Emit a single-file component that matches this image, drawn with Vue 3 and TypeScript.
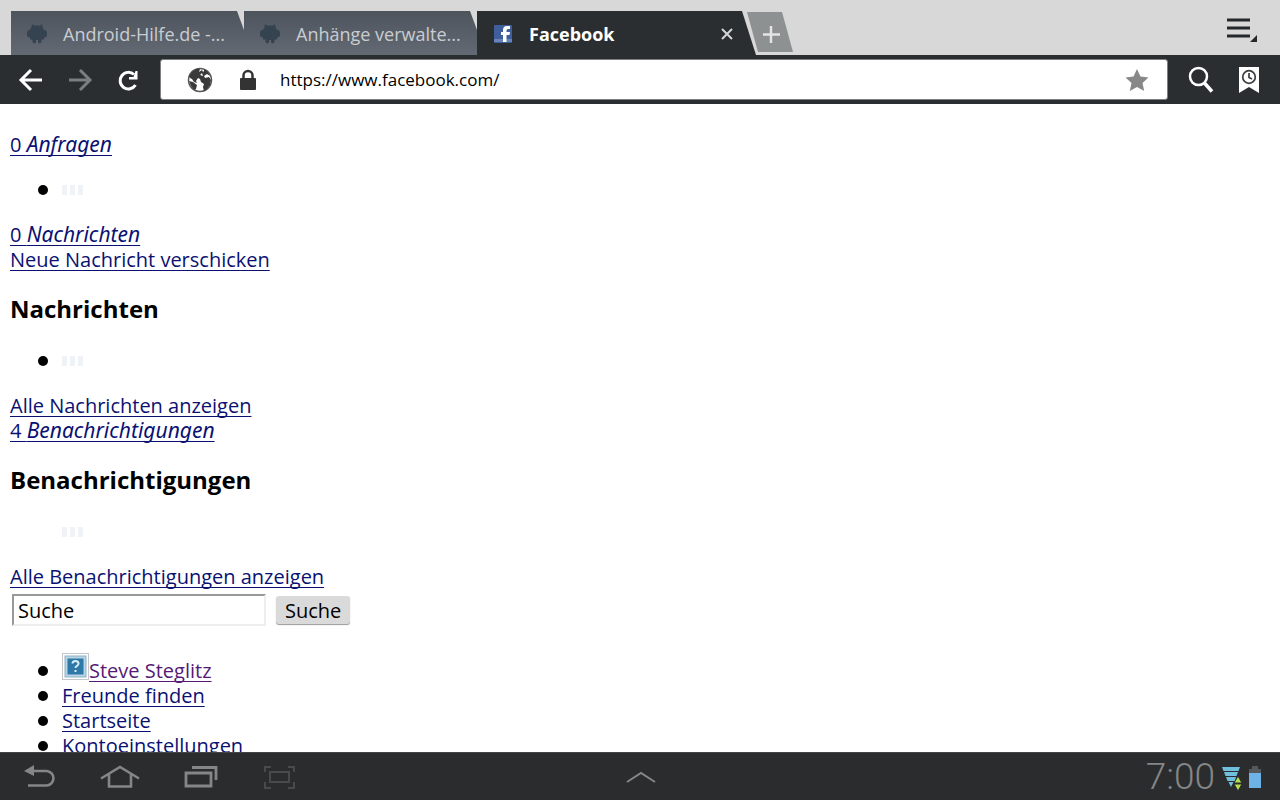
<script setup lang="ts">
import { ref } from 'vue'

interface Entry {
  label: string
  visited?: boolean
  picture?: boolean
}

const backgroundTabs: string[] = ['Android-Hilfe.de -...', 'Anhänge verwalte...']
const entries: Entry[] = [
  { label: 'Steve Steglitz', visited: true, picture: true },
  { label: 'Freunde finden' },
  { label: 'Startseite' },
  { label: 'Kontoeinstellungen' },
]
const address = ref('https://www.facebook.com/')
const query = ref('Suche')
</script>

<template>
  <div class="screen">
    <header class="tabs">
      <button v-for="tab in backgroundTabs" :key="tab" class="tab" type="button">
        <svg class="favicon" viewBox="0 0 20 20" aria-hidden="true">
          <path fill="#34434f" d="M5 0l2 1.500h6L15 0l.5 3 1.500 3h1.500l1.500 2v4l-2 1.500h-1v2h-2.500V18l-1.500 1.500-2-1V16h-2v2.500l-2 1L5.500 18v-2.500H3v-2H2L0 12V8l1.500-2H3l1.500-3z" />
        </svg>
        <span class="tab-title">{{ tab }}</span>
      </button>
      <div class="tab active">
        <svg class="favicon" viewBox="0 0 20 20" aria-hidden="true">
          <rect x="1" y="1" width="18" height="18" rx="1" fill="#3f5e9c" />
          <rect x="1" y="15" width="18" height="3" fill="#6783b8" />
          <path fill="#fff" d="M10 18v-7H8V8h2V6q0-4 4-4h3v3h-2q-1.500 0-1.500 1.500V8H17l-.5 3h-3v7z" />
        </svg>
        <span class="tab-title">Facebook</span>
        <button class="close" type="button" aria-label="Tab schließen">
          <svg width="14" height="14" viewBox="0 0 14 14"><path d="M2 2l10 10M12 2L2 12" stroke="#d4d6d6" stroke-width="2" fill="none" /></svg>
        </button>
      </div>
      <button class="new-tab" type="button" aria-label="Neuer Tab">
        <svg width="46" height="40" viewBox="0 0 46 40">
          <path fill="#8d9191" d="M0 0h35l11 40H11z" />
          <path d="M24 14v17M16 22.500h17" stroke="#e4e4e4" stroke-width="2.500" />
        </svg>
      </button>
      <button class="menu" type="button" aria-label="Menü">
        <svg width="32" height="26" viewBox="0 0 32 26">
          <path d="M1 3h23M1 11h23M1 19h23" stroke="#25282a" stroke-width="3" />
          <path fill="#25282a" d="M31 18v7h-7z" />
        </svg>
      </button>
    </header>

    <nav class="toolbar" aria-label="Browser">
      <div class="history">
        <button type="button" aria-label="Zurück">
          <svg width="26" height="24" viewBox="0 0 26 24"><path d="M13 2L3 12l10 10M3 12h21" fill="none" stroke="#fff" stroke-width="3" /></svg>
        </button>
        <button type="button" aria-label="Vorwärts">
          <svg width="26" height="24" viewBox="0 0 26 24"><path d="M13 2l10 10-10 10M23 12H2" fill="none" stroke="#7b7e80" stroke-width="3" /></svg>
        </button>
        <button type="button" aria-label="Neu laden">
          <svg width="24" height="24" viewBox="0 0 24 24">
            <path d="M19.500 17A8.300 8.300 0 1 1 18 6.500" fill="none" stroke="#fff" stroke-width="3" />
            <path fill="#fff" d="M21.500 3v8.500H13V9h4.500l2-6z" />
          </svg>
        </button>
      </div>
      <div class="address">
        <svg class="globe" width="26" height="26" viewBox="0 0 26 26" aria-hidden="true">
          <circle cx="13" cy="13" r="11.500" fill="#fff" stroke="#555" stroke-width="1.500" />
          <path fill="#3a3a3a" d="M2 9l3-4 4-3 4 0-1 3 3-2 1 2-3 3 3 1-3 3-2-1-2 3 1 2-3-1-2-3-2-1zM2 14l4 1 4 3-1 4-2 1-3-4zM17 2l4 3 2 4-3-2-3 2 1 2 4-1 2 3-1 5-3 4-3 2-1-4 1-3-3-2-1-3 3-3-1-3 2-2z" />
        </svg>
        <svg class="lock" width="18" height="22" viewBox="0 0 18 22" aria-hidden="true">
          <path d="M4.500 10V6.500a4.500 4.500 0 0 1 9 0V10" fill="none" stroke="#333" stroke-width="2.500" />
          <rect x="1" y="9" width="16" height="12" rx="1" fill="#333" />
        </svg>
        <input v-model="address" class="url" type="text" aria-label="Adresse" />
        <button type="button" aria-label="Lesezeichen hinzufügen">
          <svg width="24" height="24" viewBox="0 0 24 24"><path fill="#888" d="M12 1l3.500 7.500 8 1-6 5.500 1.700 8L12 19l-7.200 4 1.700-8-6-5.500 8-1z" /></svg>
        </button>
      </div>
      <div class="tools">
        <button type="button" aria-label="Suchen">
          <svg width="26" height="28" viewBox="0 0 26 28">
            <circle cx="10.500" cy="10.500" r="8.500" fill="none" stroke="#fff" stroke-width="2.500" />
            <path d="M16 16.500l8 9" stroke="#fff" stroke-width="3.500" />
          </svg>
        </button>
        <button type="button" aria-label="Lesezeichen">
          <svg width="20" height="28" viewBox="0 0 20 28">
            <path fill="#fff" d="M0 1h20v26l-10-6-10 6z" />
            <circle cx="10" cy="11" r="6.300" fill="none" stroke="#3a3e40" stroke-width="1.700" />
            <path d="M10 7v4.500l3 1.500" fill="none" stroke="#3a3e40" stroke-width="1.700" />
          </svg>
        </button>
      </div>
    </nav>

    <main class="page">
      <div><a href="#">0 <em>Anfragen</em></a></div>
      <ul><li><span class="loader"><i></i><i></i><i></i></span></li></ul>
      <div><a href="#">0 <em>Nachrichten</em></a></div>
      <div><a href="#">Neue Nachricht verschicken</a></div>
      <h3>Nachrichten</h3>
      <ul><li><span class="loader"><i></i><i></i><i></i></span></li></ul>
      <div><a href="#">Alle Nachrichten anzeigen</a></div>
      <div><a href="#">4 <em>Benachrichtigungen</em></a></div>
      <h3>Benachrichtigungen</h3>
      <div class="loading"><span class="loader"><i></i><i></i><i></i></span></div>
      <div><a href="#">Alle Benachrichtigungen anzeigen</a></div>
      <form @submit.prevent>
        <input v-model="query" class="query" type="text" aria-label="Suche" />
        <button class="submit" type="submit">Suche</button>
      </form>
      <ul>
        <li v-for="entry in entries" :key="entry.label" :class="{ pictured: entry.picture }">
          <svg v-if="entry.picture" class="missing" width="27" height="27" viewBox="0 0 27 27" aria-hidden="true">
            <rect x=".5" y=".5" width="26" height="26" fill="#fff" stroke="#c3c7ca" />
            <rect x="3" y="3" width="21" height="21" fill="#b9d4e4" stroke="#8db2c9" />
            <rect x="5.500" y="5.500" width="16" height="16" fill="#2f79a8" />
            <path d="M10.500 10.500q0-2.500 3-2.500t3 2.500q0 1.500-1.500 2.300-1.500.7-1.500 2.200" fill="none" stroke="#d7edf8" stroke-width="2" />
            <rect x="12.500" y="17" width="2" height="2" fill="#d7edf8" />
          </svg>
          <a href="#" :class="{ visited: entry.visited }">{{ entry.label }}</a>
        </li>
      </ul>
    </main>

    <footer class="system">
      <div class="keys">
        <button type="button" aria-label="Zurück">
          <svg width="40" height="28" viewBox="0 0 40 28"><path d="M9 8h18a7.300 7.300 0 0 1 0 14.500H8" fill="none" stroke="#858687" stroke-width="2.600" /><path fill="#858687" d="M4 8l10-6v11z" /></svg>
        </button>
        <button type="button" aria-label="Startbildschirm">
          <svg width="40" height="28" viewBox="0 0 40 28"><path d="M1 15.500L20 4l19 11.500M9 11.500V23.500h22V11.500" fill="none" stroke="#858687" stroke-width="2.600" /></svg>
        </button>
        <button type="button" aria-label="Letzte Apps">
          <svg width="40" height="28" viewBox="0 0 40 28"><path d="M6 10h25v13H6zM12 4.500h24V17" fill="none" stroke="#858687" stroke-width="2.800" /></svg>
        </button>
        <button type="button" aria-label="Bildschirmfoto">
          <svg width="40" height="28" viewBox="0 0 40 28"><path d="M10 9h19v10H10zM5 9V4h6M28 4h6v5M5 19v6h6M34 19v6h-6" fill="none" stroke="#484a4b" stroke-width="2" /></svg>
        </button>
      </div>
      <button type="button" aria-label="Mini-Apps">
        <svg width="30" height="14" viewBox="0 0 30 14"><path d="M1 12L15 3l14 9" fill="none" stroke="#858687" stroke-width="2" /></svg>
      </button>
      <div class="status">
        <time>7:00</time>
        <svg width="22" height="28" viewBox="0 0 22 28" aria-hidden="true">
          <path fill="#70bfdc" d="M1 4h18l-1.500 4h-15zM3 9h14l-1.500 4h-11zM5 14h10l-1 4H6.500zM7.500 19h5L10 24z" />
          <path fill="#b5e04b" stroke="#2a2c2e" d="M17 13l4 7h-8zM17 28l4-7h-8z" />
        </svg>
        <svg width="12" height="24" viewBox="0 0 12 24" aria-hidden="true">
          <path fill="#55595c" d="M3 1h6v3h3v5H0V4h3z" /><path fill="#6db3e8" d="M0 8h12v15H0z" />
        </svg>
      </div>
    </footer>
  </div>
</template>

<style>
body {
  margin: 0;
}
</style>

<style scoped>
.screen {
  display: flex;
  flex-direction: column;
  height: 100vh;
  overflow: hidden;
  background: #fff;
  color: #000;
  font: 20px/25px "Open Sans", "Noto Sans", sans-serif;
}
* {
  box-sizing: border-box;
}
svg {
  display: block;
  flex: none;
}
button {
  padding: 0;
  border: 0;
  background: none;
  color: inherit;
  font: inherit;
}
input {
  font: inherit;
}
.tabs {
  display: flex;
  flex: none;
  height: 55px;
  padding: 11px 22px 0 11px;
  background: #d8d8d8;
  font-size: 18px;
}
.tab {
  display: flex;
  align-items: center;
  flex: 0 1 233px;
  min-width: 0;
  padding: 2px 0 0 16px;
  background: linear-gradient(#4d545c, #646a73);
  color: #c9cdd1;
  clip-path: polygon(0 0, calc(100% - 7px) 0, 100% 19px, 100% 100%, 0 100%);
}
.tab.active {
  flex-basis: 279px;
  padding-right: 20px;
  background: #2b2e30;
  color: #fff;
  font-weight: 700;
  clip-path: polygon(0 0, calc(100% - 14px) 0, 100% 100%, 0 100%);
}
.favicon {
  width: 20px;
  height: 20px;
  margin-right: 16px;
}
.tab-title {
  white-space: nowrap;
}
.close {
  margin-left: auto;
}
.active .close {
  padding-right: 2px;
}
.new-tab {
  display: flex;
  margin-left: -9px;
  padding-top: 1px;
}
.menu {
  margin: -6px 0 0 auto;
}
.toolbar {
  display: flex;
  align-items: center;
  flex: none;
  gap: 20px;
  height: 49px;
  padding: 0 21px 0 18px;
  background: #2b2e30;
}
.history {
  display: flex;
  align-items: center;
  gap: 23px;
}
.tools {
  display: flex;
  align-items: center;
  gap: 25px;
}
.address {
  display: flex;
  align-items: center;
  flex: 1;
  height: 41px;
  padding: 0 18px 0 26px;
  border: 1px solid #7c7f80;
  border-radius: 3px;
  background: #fff;
}
.lock {
  margin: 0 23px 0 26px;
}
.url {
  flex: 1;
  min-width: 0;
  padding: 0;
  border: 0;
  outline: 0;
  background: none;
  font-size: 17px;
}
.page {
  flex: 1;
  min-height: 0;
  padding: 28px 10px 0;
  overflow: hidden;
}
a {
  color: #0a1172;
  text-decoration: underline;
  text-decoration-thickness: 1px;
  text-decoration-skip-ink: none;
  text-underline-offset: 3px;
}
a.visited {
  color: #551a78;
}
em {
  font-family: "Noto Sans", sans-serif;
  font-size: 21px;
  line-height: 20px;
}
h3 {
  margin: 22px 0 24px;
  font-size: 24px;
  line-height: 30px;
}
ul {
  margin: 20px 0;
  padding: 0 0 0 28px;
  list-style: none;
}
li {
  display: flex;
  align-items: center;
  height: 25px;
}
li::before {
  width: 10px;
  height: 10px;
  margin-right: 14px;
  border-radius: 50%;
  background: #000;
  content: "";
}
.pictured {
  height: 30px;
  align-items: flex-end;
}
.pictured::before {
  margin-bottom: 7px;
}
.missing {
  align-self: flex-start;
}
.loader {
  display: flex;
  gap: 3px;
}
.loader i {
  width: 5px;
  height: 10px;
  background: #eff3f7;
}
.loading {
  display: flex;
  align-items: center;
  height: 25px;
  margin-bottom: 20px;
  padding-left: 52px;
}
form {
  display: flex;
  align-items: center;
  gap: 10px;
  padding: 5px 2px 7px;
}
.query {
  width: 254px;
  height: 32px;
  padding: 0 4px;
  border: 2px solid;
  border-color: #999 #eee #eee #999;
  background: #fff;
}
.submit {
  height: 28px;
  padding: 0 9px;
  border-radius: 3px;
  background: #dadada;
  box-shadow: 0 1px 1px #999;
}
.system {
  display: grid;
  grid-template-columns: 1fr auto 1fr;
  align-items: center;
  flex: none;
  height: 48px;
  padding: 0 19px 0 20px;
  border-top: 1px solid #424446;
  background: #2a2c2e;
}
.keys {
  display: flex;
  gap: 40px;
}
.status {
  display: flex;
  align-items: center;
  justify-content: flex-end;
  gap: 6px;
}
time {
  color: #858687;
  font: 300 37px/40px Roboto, sans-serif;
}
</style>
